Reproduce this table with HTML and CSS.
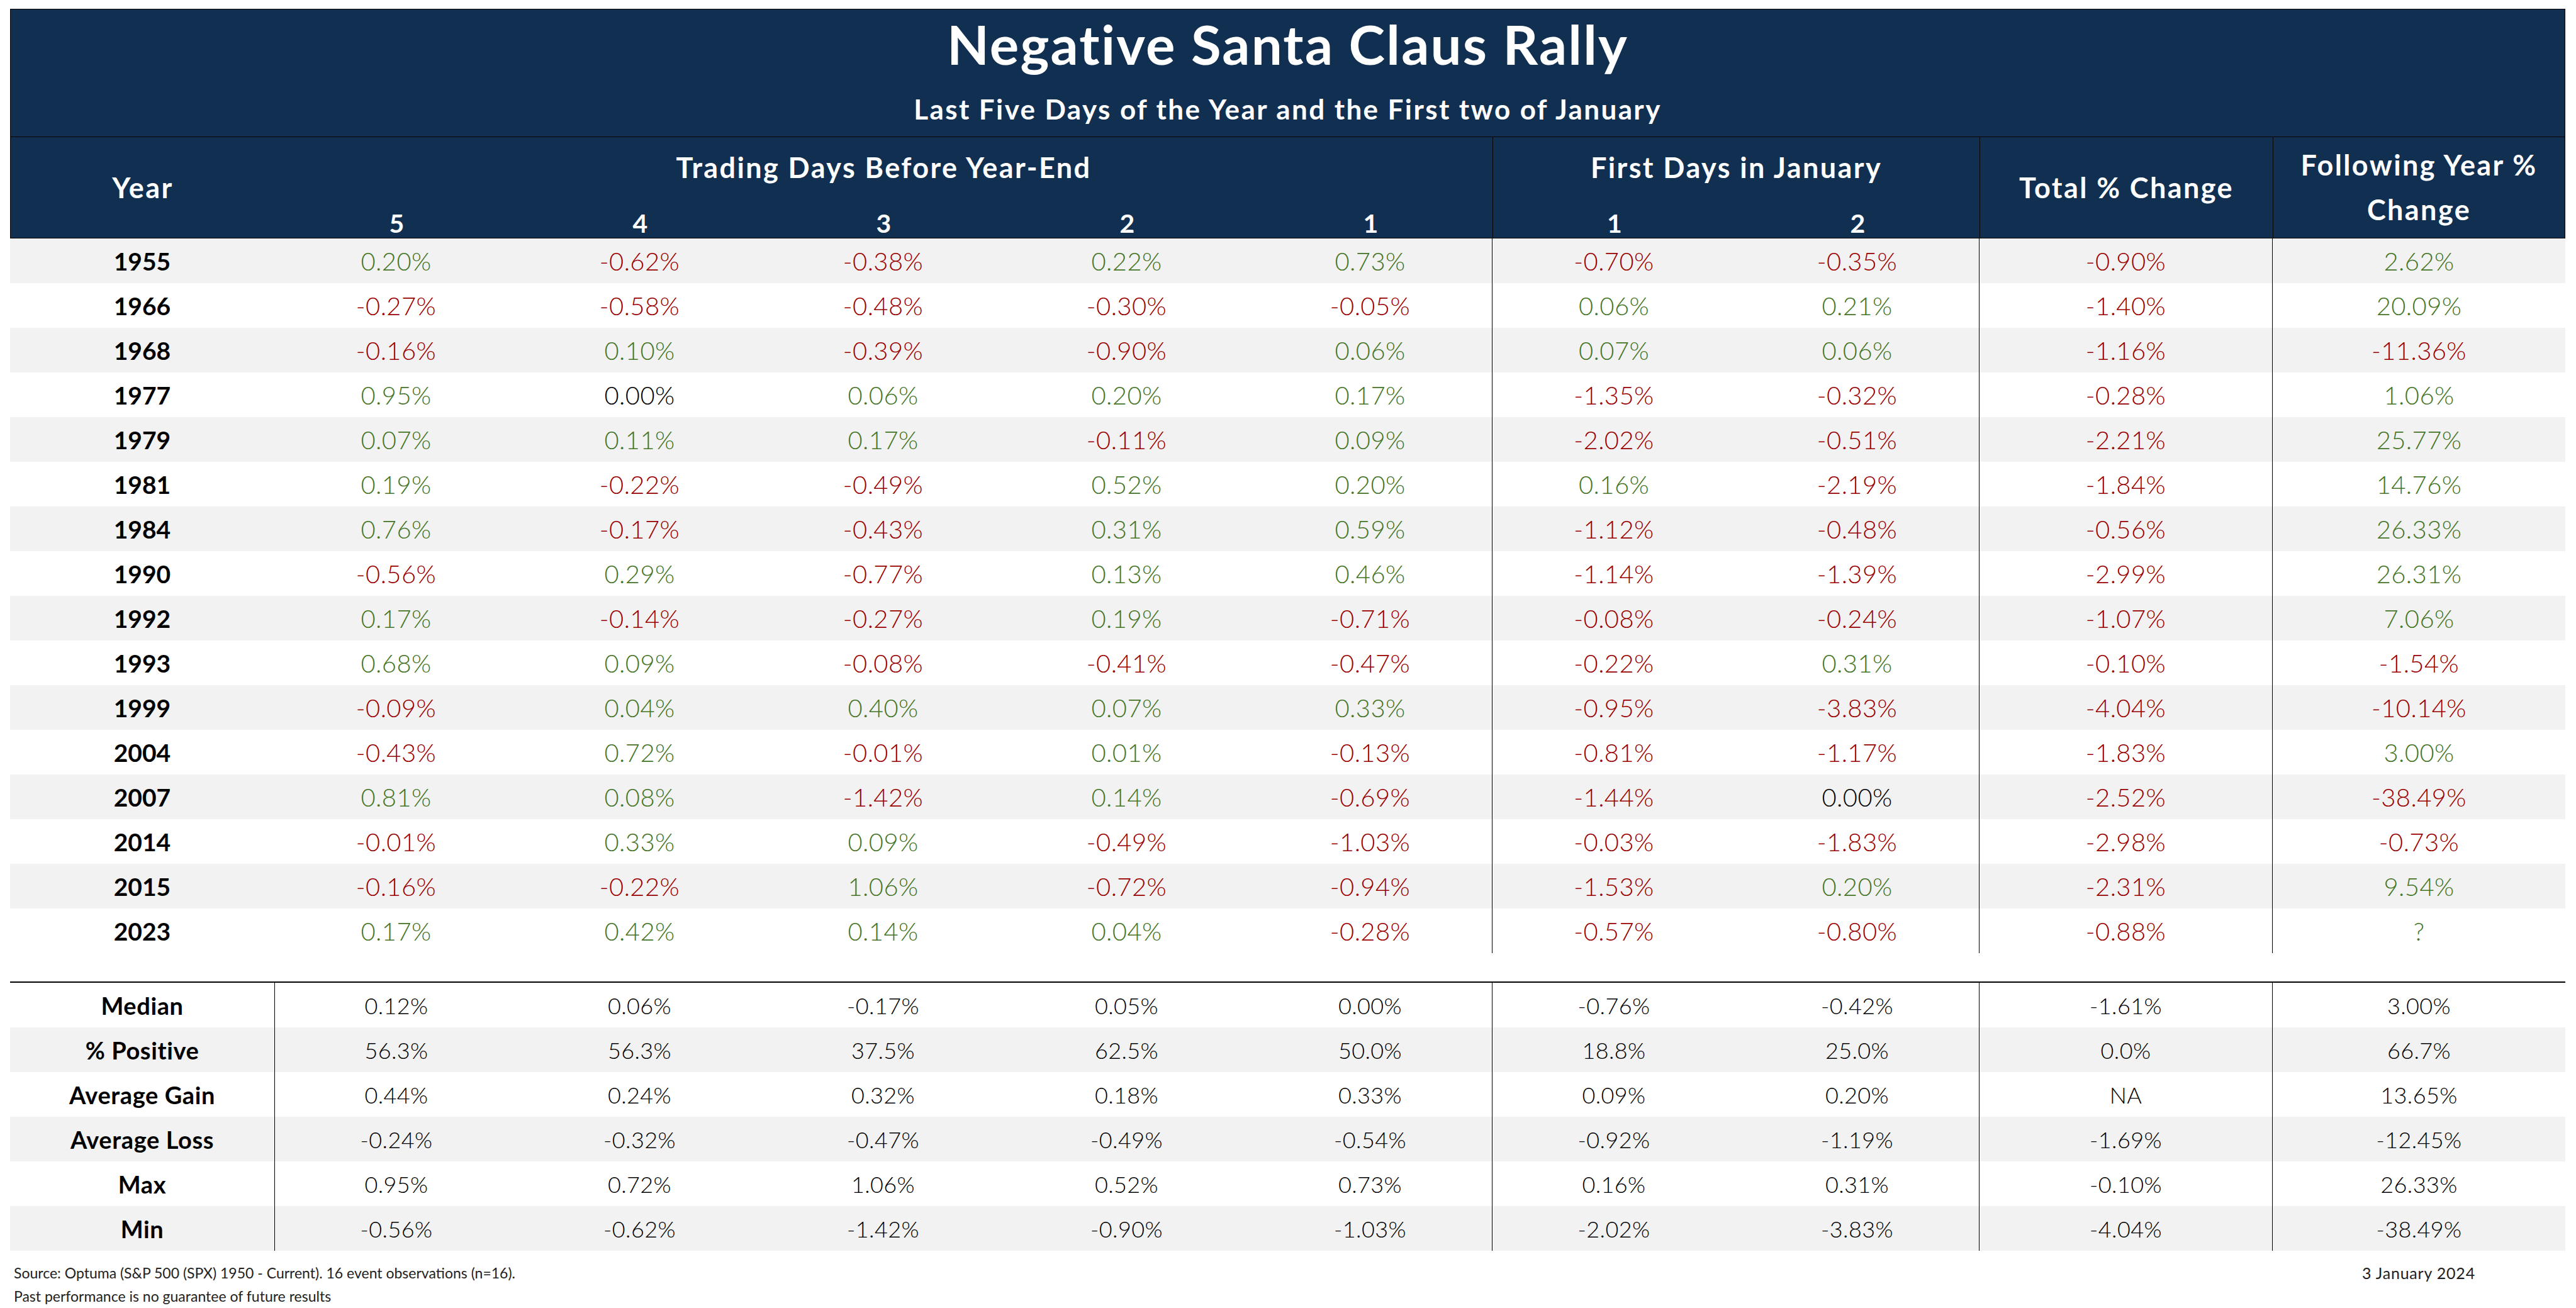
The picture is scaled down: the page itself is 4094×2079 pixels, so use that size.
FILE: index.html
```html
<!DOCTYPE html>
<html lang="en">
<head>
<meta charset="utf-8">
<title>Negative Santa Claus Rally</title>
<link rel="stylesheet" href="styles.css">
</head>
<body>
<div class="sheet">
  <header class="banner">
    <h1 class="title">Negative Santa Claus Rally</h1>
    <p class="subtitle">Last Five Days of the Year and the First two of January</p>
  </header>

  <div class="grid colhead">
    <div class="hc h-year">Year</div>
    <div class="hc h-trading">Trading Days Before Year-End</div>
    <div class="hc h-jan sep">First Days in January</div>
    <div class="hc h-total sep">Total % Change</div>
    <div class="hc h-follow sep">Following Year %<br>Change</div>
    <div class="hc num">5</div>
    <div class="hc num">4</div>
    <div class="hc num">3</div>
    <div class="hc num">2</div>
    <div class="hc num">1</div>
    <div class="hc num sep">1</div>
    <div class="hc num">2</div>
  </div>

  <div class="rows">
    <div class="grid row"><div class="c yr">1955</div><div class="c pos">0.20%</div><div class="c neg">-0.62%</div><div class="c neg">-0.38%</div><div class="c pos">0.22%</div><div class="c pos">0.73%</div><div class="c neg sep">-0.70%</div><div class="c neg">-0.35%</div><div class="c neg sep">-0.90%</div><div class="c pos sep">2.62%</div></div>
    <div class="grid row"><div class="c yr">1966</div><div class="c neg">-0.27%</div><div class="c neg">-0.58%</div><div class="c neg">-0.48%</div><div class="c neg">-0.30%</div><div class="c neg">-0.05%</div><div class="c pos sep">0.06%</div><div class="c pos">0.21%</div><div class="c neg sep">-1.40%</div><div class="c pos sep">20.09%</div></div>
    <div class="grid row"><div class="c yr">1968</div><div class="c neg">-0.16%</div><div class="c pos">0.10%</div><div class="c neg">-0.39%</div><div class="c neg">-0.90%</div><div class="c pos">0.06%</div><div class="c pos sep">0.07%</div><div class="c pos">0.06%</div><div class="c neg sep">-1.16%</div><div class="c neg sep">-11.36%</div></div>
    <div class="grid row"><div class="c yr">1977</div><div class="c pos">0.95%</div><div class="c zero">0.00%</div><div class="c pos">0.06%</div><div class="c pos">0.20%</div><div class="c pos">0.17%</div><div class="c neg sep">-1.35%</div><div class="c neg">-0.32%</div><div class="c neg sep">-0.28%</div><div class="c pos sep">1.06%</div></div>
    <div class="grid row"><div class="c yr">1979</div><div class="c pos">0.07%</div><div class="c pos">0.11%</div><div class="c pos">0.17%</div><div class="c neg">-0.11%</div><div class="c pos">0.09%</div><div class="c neg sep">-2.02%</div><div class="c neg">-0.51%</div><div class="c neg sep">-2.21%</div><div class="c pos sep">25.77%</div></div>
    <div class="grid row"><div class="c yr">1981</div><div class="c pos">0.19%</div><div class="c neg">-0.22%</div><div class="c neg">-0.49%</div><div class="c pos">0.52%</div><div class="c pos">0.20%</div><div class="c pos sep">0.16%</div><div class="c neg">-2.19%</div><div class="c neg sep">-1.84%</div><div class="c pos sep">14.76%</div></div>
    <div class="grid row"><div class="c yr">1984</div><div class="c pos">0.76%</div><div class="c neg">-0.17%</div><div class="c neg">-0.43%</div><div class="c pos">0.31%</div><div class="c pos">0.59%</div><div class="c neg sep">-1.12%</div><div class="c neg">-0.48%</div><div class="c neg sep">-0.56%</div><div class="c pos sep">26.33%</div></div>
    <div class="grid row"><div class="c yr">1990</div><div class="c neg">-0.56%</div><div class="c pos">0.29%</div><div class="c neg">-0.77%</div><div class="c pos">0.13%</div><div class="c pos">0.46%</div><div class="c neg sep">-1.14%</div><div class="c neg">-1.39%</div><div class="c neg sep">-2.99%</div><div class="c pos sep">26.31%</div></div>
    <div class="grid row"><div class="c yr">1992</div><div class="c pos">0.17%</div><div class="c neg">-0.14%</div><div class="c neg">-0.27%</div><div class="c pos">0.19%</div><div class="c neg">-0.71%</div><div class="c neg sep">-0.08%</div><div class="c neg">-0.24%</div><div class="c neg sep">-1.07%</div><div class="c pos sep">7.06%</div></div>
    <div class="grid row"><div class="c yr">1993</div><div class="c pos">0.68%</div><div class="c pos">0.09%</div><div class="c neg">-0.08%</div><div class="c neg">-0.41%</div><div class="c neg">-0.47%</div><div class="c neg sep">-0.22%</div><div class="c pos">0.31%</div><div class="c neg sep">-0.10%</div><div class="c neg sep">-1.54%</div></div>
    <div class="grid row"><div class="c yr">1999</div><div class="c neg">-0.09%</div><div class="c pos">0.04%</div><div class="c pos">0.40%</div><div class="c pos">0.07%</div><div class="c pos">0.33%</div><div class="c neg sep">-0.95%</div><div class="c neg">-3.83%</div><div class="c neg sep">-4.04%</div><div class="c neg sep">-10.14%</div></div>
    <div class="grid row"><div class="c yr">2004</div><div class="c neg">-0.43%</div><div class="c pos">0.72%</div><div class="c neg">-0.01%</div><div class="c pos">0.01%</div><div class="c neg">-0.13%</div><div class="c neg sep">-0.81%</div><div class="c neg">-1.17%</div><div class="c neg sep">-1.83%</div><div class="c pos sep">3.00%</div></div>
    <div class="grid row"><div class="c yr">2007</div><div class="c pos">0.81%</div><div class="c pos">0.08%</div><div class="c neg">-1.42%</div><div class="c pos">0.14%</div><div class="c neg">-0.69%</div><div class="c neg sep">-1.44%</div><div class="c zero">0.00%</div><div class="c neg sep">-2.52%</div><div class="c neg sep">-38.49%</div></div>
    <div class="grid row"><div class="c yr">2014</div><div class="c neg">-0.01%</div><div class="c pos">0.33%</div><div class="c pos">0.09%</div><div class="c neg">-0.49%</div><div class="c neg">-1.03%</div><div class="c neg sep">-0.03%</div><div class="c neg">-1.83%</div><div class="c neg sep">-2.98%</div><div class="c neg sep">-0.73%</div></div>
    <div class="grid row"><div class="c yr">2015</div><div class="c neg">-0.16%</div><div class="c neg">-0.22%</div><div class="c pos">1.06%</div><div class="c neg">-0.72%</div><div class="c neg">-0.94%</div><div class="c neg sep">-1.53%</div><div class="c pos">0.20%</div><div class="c neg sep">-2.31%</div><div class="c pos sep">9.54%</div></div>
    <div class="grid row"><div class="c yr">2023</div><div class="c pos">0.17%</div><div class="c pos">0.42%</div><div class="c pos">0.14%</div><div class="c pos">0.04%</div><div class="c neg">-0.28%</div><div class="c neg sep">-0.57%</div><div class="c neg">-0.80%</div><div class="c neg sep">-0.88%</div><div class="c pos sep">?</div></div>
  </div>

  <div class="stats">
    <div class="grid row"><div class="c lbl">Median</div><div class="c sv sep">0.12%</div><div class="c sv">0.06%</div><div class="c sv">-0.17%</div><div class="c sv">0.05%</div><div class="c sv">0.00%</div><div class="c sv sep">-0.76%</div><div class="c sv">-0.42%</div><div class="c sv sep">-1.61%</div><div class="c sv sep">3.00%</div></div>
    <div class="grid row"><div class="c lbl">% Positive</div><div class="c sv sep">56.3%</div><div class="c sv">56.3%</div><div class="c sv">37.5%</div><div class="c sv">62.5%</div><div class="c sv">50.0%</div><div class="c sv sep">18.8%</div><div class="c sv">25.0%</div><div class="c sv sep">0.0%</div><div class="c sv sep">66.7%</div></div>
    <div class="grid row"><div class="c lbl">Average Gain</div><div class="c sv sep">0.44%</div><div class="c sv">0.24%</div><div class="c sv">0.32%</div><div class="c sv">0.18%</div><div class="c sv">0.33%</div><div class="c sv sep">0.09%</div><div class="c sv">0.20%</div><div class="c sv sep">NA</div><div class="c sv sep">13.65%</div></div>
    <div class="grid row"><div class="c lbl">Average Loss</div><div class="c sv sep">-0.24%</div><div class="c sv">-0.32%</div><div class="c sv">-0.47%</div><div class="c sv">-0.49%</div><div class="c sv">-0.54%</div><div class="c sv sep">-0.92%</div><div class="c sv">-1.19%</div><div class="c sv sep">-1.69%</div><div class="c sv sep">-12.45%</div></div>
    <div class="grid row"><div class="c lbl">Max</div><div class="c sv sep">0.95%</div><div class="c sv">0.72%</div><div class="c sv">1.06%</div><div class="c sv">0.52%</div><div class="c sv">0.73%</div><div class="c sv sep">0.16%</div><div class="c sv">0.31%</div><div class="c sv sep">-0.10%</div><div class="c sv sep">26.33%</div></div>
    <div class="grid row"><div class="c lbl">Min</div><div class="c sv sep">-0.56%</div><div class="c sv">-0.62%</div><div class="c sv">-1.42%</div><div class="c sv">-0.90%</div><div class="c sv">-1.03%</div><div class="c sv sep">-2.02%</div><div class="c sv">-3.83%</div><div class="c sv sep">-4.04%</div><div class="c sv sep">-38.49%</div></div>
  </div>

  <footer class="foot">
    <div class="notes">
      <div>Source: Optuma (S&amp;P 500 (SPX) 1950 - Current). 16 event observations (n=16).</div>
      <div>Past performance is no guarantee of future results</div>
    </div>
    <div class="date">3 January 2024</div>
  </footer>
</div>
</body>
</html>
```

FILE: styles.css
```css
html, body {
  margin: 0;
  padding: 0;
  background: #ffffff;
}

body {
  font-family: Lato, "Open Sans", "Noto Sans", sans-serif;
  color: #000;
}

.sheet {
  width: 4061px;
  margin: 14px 0 0 16px;
}

.banner {
  box-sizing: border-box;
  height: 204px;
  background: #112f51;
  border: 1px solid #000;
  padding-top: 11px;
  text-align: center;
  color: #fff;
}

.title {
  margin: 0;
  font-size: 87px;
  line-height: 87px;
  font-weight: 700;
  letter-spacing: 2.2px;
}

.subtitle {
  margin: 38px 0 0;
  font-size: 44px;
  line-height: 44px;
  font-weight: 700;
  letter-spacing: 2.4px;
}

.grid {
  display: grid;
  grid-template-columns: 420px repeat(7, 387px) 466px 1fr;
}

.colhead {
  box-sizing: border-box;
  height: 161px;
  grid-template-rows: 95px 65px;
  background: #112f51;
  border: 1px solid #000;
  border-top: none;
  color: #fff;
  font-weight: 700;
  font-size: 45px;
  letter-spacing: 2.4px;
}

.hc {
  display: flex;
  align-items: center;
  justify-content: center;
  text-align: center;
}

.sep {
  border-left: 1px solid #000;
}

.h-year {
  grid-column: 1;
  grid-row: 1 / 3;
}

.h-trading {
  grid-column: 2 / 7;
  grid-row: 1;
}

.h-jan {
  grid-column: 7 / 9;
  grid-row: 1;
}

.h-total {
  grid-column: 9;
  grid-row: 1 / 3;
}

.h-follow {
  grid-column: 10;
  grid-row: 1 / 3;
  line-height: 71px;
}

.num {
  grid-row: 2;
  font-size: 41px;
  letter-spacing: 0;
  padding-top: 18px;
}

.row {
  height: 71px;
}

.rows .row:nth-child(odd),
.stats .row:nth-child(even) {
  background: #f2f2f2;
}

.c {
  display: flex;
  align-items: center;
  justify-content: center;
  font-size: 40px;
  font-weight: 300;
  letter-spacing: 0.4px;
}

.yr {
  font-weight: 700;
  font-size: 39px;
  letter-spacing: 0;
}

.pos {
  color: #457526;
}

.neg {
  color: #9a0000;
}

.zero {
  color: #000;
}

.stats {
  margin-top: 45px;
  border-top: 2px solid #000;
}

.lbl {
  font-weight: 700;
  font-size: 38px;
  letter-spacing: 0.6px;
}

.sv {
  font-size: 36px;
  color: #000;
}

.foot {
  display: grid;
  grid-template-columns: 1fr 466px;
  padding-top: 17px;
  font-size: 23px;
  line-height: 37px;
  color: #222;
}

.notes {
  padding-left: 6px;
}

.date {
  text-align: center;
  font-size: 25px;
  letter-spacing: 0.8px;
}
```
